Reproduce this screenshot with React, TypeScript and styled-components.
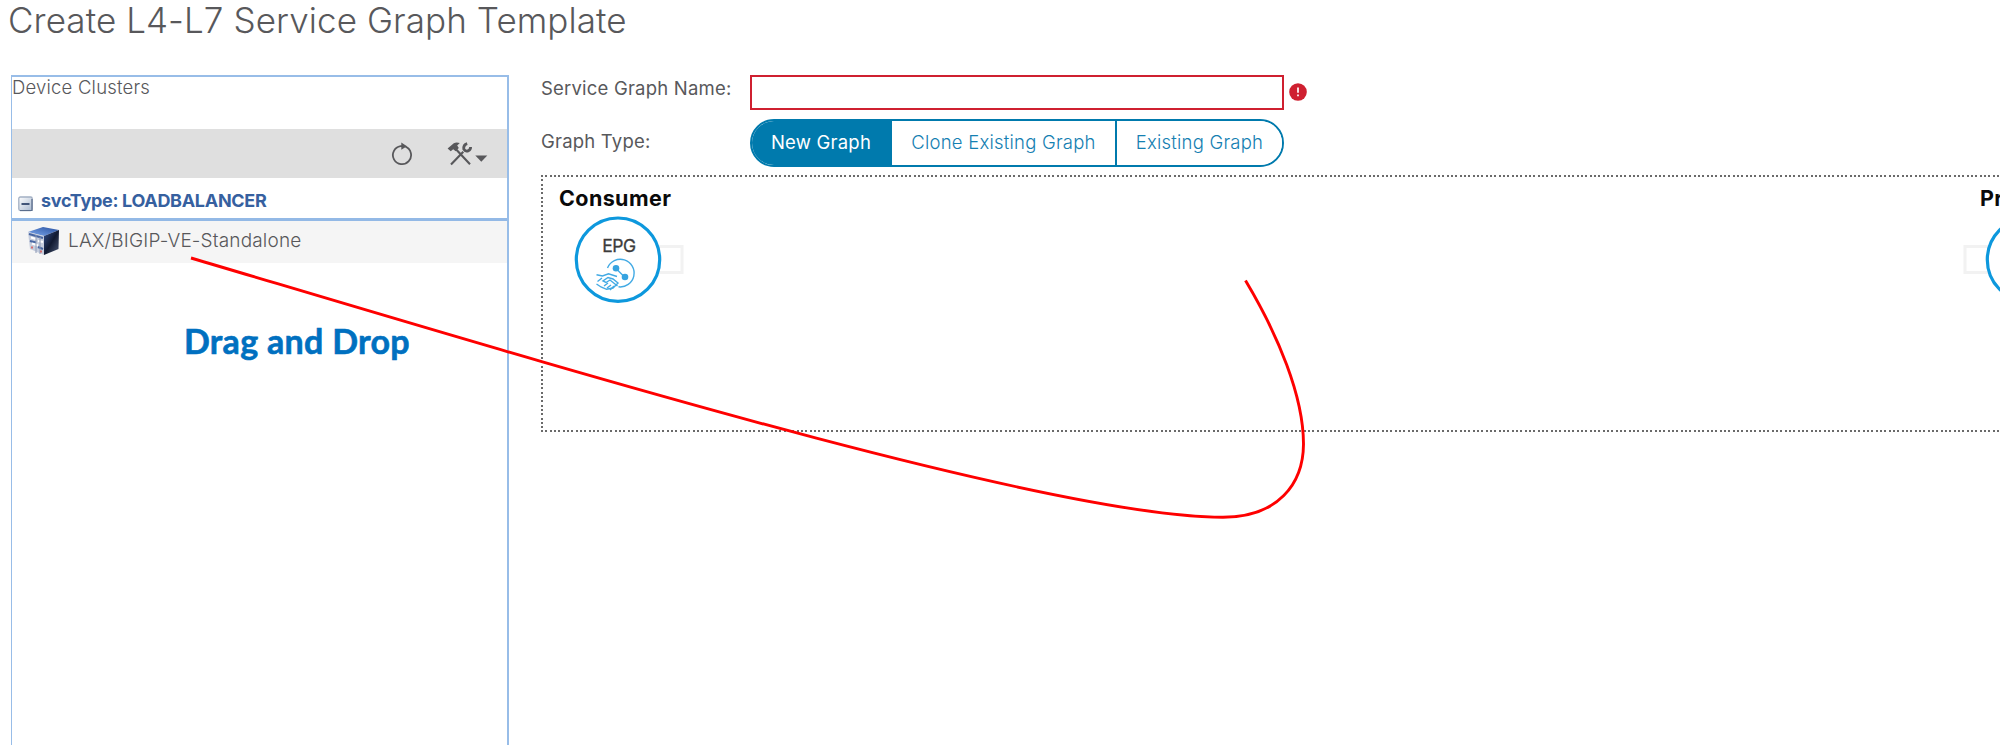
import React from "react";
import styled, { createGlobalStyle } from "styled-components";

const GlobalStyle = createGlobalStyle`
  * { box-sizing: border-box; }
  body { margin: 0; background: #fff; font-family: Inter, "Liberation Sans", sans-serif; }
`;

const Page = styled.div`
  position: relative;
  width: 2000px;
  height: 745px;
  overflow: hidden;
  color: #58585b;
  white-space: nowrap;
`;

const Title = styled.h1`
  margin: 0;
  height: 75px;
  padding-left: 8px;
  font-size: 35px;
  font-weight: 300;
  line-height: 40px;
  letter-spacing: 0.08px;
`;

const Body = styled.main`
  display: flex;
  height: 670px;
  padding-left: 11px;
`;

const Sidebar = styled.aside`
  flex: none;
  width: 498px;
  border: 2px solid #98bde8;
  border-left-width: 1px;
  border-bottom: 0;
`;

const SidebarTitle = styled.div`
  height: 52px;
  font-size: 18.5px;
  font-weight: 300;
  line-height: 21px;
  letter-spacing: 0.2px;
`;

const Toolbar = styled.div`
  display: flex;
  align-items: center;
  justify-content: flex-end;
  gap: 34px;
  height: 49px;
  padding-right: 19px;
  background: #dfdfdf;
`;

const GroupHeader = styled.div`
  display: flex;
  align-items: flex-end;
  gap: 8px;
  height: 43px;
  padding: 0 0 6px 6px;
  border-bottom: 3px solid #93b9e6;
  color: #36609f;
  font-size: 18px;
  font-weight: 700;
  line-height: 23px;
  letter-spacing: -0.3px;
`;

const DeviceRow = styled.div`
  display: flex;
  align-items: center;
  gap: 8px;
  height: 42px;
  padding: 0 0 3px 15px;
  background: #f5f5f5;
  font-size: 19px;
  font-weight: 300;
  letter-spacing: 0.16px;
`;

const Content = styled.section`
  flex: none;
  width: 1600px;
  margin-left: 32px;
`;

const FieldRow = styled.div<{ $height: number }>`
  display: flex;
  align-items: flex-start;
  height: ${(p) => p.$height}px;
`;

const Label = styled.label<{ $drop: number }>`
  width: 209px;
  padding-top: ${(p) => p.$drop}px;
  font-size: 18.5px;
  line-height: 24px;
  letter-spacing: 0.2px;
`;

const NameInput = styled.input`
  width: 534px;
  height: 35px;
  border: 2px solid #cf2030;
  outline: none;
  background: #fff;
`;

const ErrorIcon = styled.svg`
  margin: 8px 0 0 5px;
`;

const Segments = styled.div`
  display: flex;
  width: 534px;
  height: 48px;
  border: 2px solid #007aad;
  border-radius: 24px;
  overflow: hidden;
`;

const Segment = styled.button<{ $width: number; $active?: boolean }>`
  flex: none;
  width: ${(p) => p.$width}px;
  padding: 0 0 2px;
  border: 0;
  border-left: ${(p) => (p.$active ? "0" : "2px solid #007aad")};
  background: ${(p) => (p.$active ? "#007aad" : "#fff")};
  color: ${(p) => (p.$active ? "#fff" : "#1580b2")};
  font: ${(p) => (p.$active ? 400 : 300)} 18.5px Inter, sans-serif;
  letter-spacing: 0.22px;
`;

const dots = (dir: string) =>
  `repeating-linear-gradient(${dir}, #6a6a6a 0 2px, #ffffff 2px 4.333px)`;

const Canvas = styled.div`
  display: flex;
  justify-content: space-between;
  height: 257px;
  margin-top: 8px;
  padding: 10px 0 0 18px;
  background-image: ${dots("to right")}, ${dots("to right")}, ${dots("to bottom")};
  background-size: 100% 2px, 100% 2px, 2px 100%;
  background-position: 0 0, 0 100%, 0 0;
  background-repeat: no-repeat;
`;

const Endpoint = styled.div<{ $width: number }>`
  width: ${(p) => p.$width}px;
`;

const EndpointName = styled.div<{ $indent?: number }>`
  height: 31px;
  padding-left: ${(p) => p.$indent ?? 0}px;
  color: #0a0a0a;
  font-size: 21.5px;
  font-weight: 700;
  line-height: 26px;
  letter-spacing: 0.4px;
`;

const EndpointShape = styled.svg`
  display: block;
  overflow: visible;
`;

const Callout = styled.div`
  position: absolute;
  left: 184px;
  top: 321px;
  color: #0070c0;
  font-family: Lato, sans-serif;
  font-size: 34px;
  font-weight: 700;
  line-height: 40px;
  letter-spacing: 0.3px;
  -webkit-text-stroke: 0.6px #0070c0;
`;

const Arrow = styled.svg`
  position: absolute;
  inset: 0;
  pointer-events: none;
`;

const RefreshIcon = () => (
  <svg width="22" height="24" viewBox="0 0 22 24" fill="none">
    <path d="M14.5 4.7A9.1 9.1 0 1 1 9.6 4.1H12" stroke="#58585b" strokeWidth="1.8" />
    <path d="M10.3 .6L16 4.2L10.3 7.8Z" fill="#58585b" />
  </svg>
);

const ToolsIcon = () => (
  <svg width="41" height="26" viewBox="0 0 41 26" fill="none">
    <path d="M4 23.5L16.3 10.8M9.2 8.5L23 23.2" stroke="#58585b" strokeWidth="2.1" />
    <path d="M.6 7.4L6.8 2.3Q9.4 .8 12.8 2.1L10.2 4.6L11.8 7L8.6 10.2L6.2 8.3L3.7 10.3Z" fill="#58585b" />
    <path d="M20.2 2.6Q16.2 3.8 16.8 8.2Q18.3 11 21.6 9.6Q23.7 8.4 23.6 6" stroke="#58585b" strokeWidth="2.8" />
    <path d="M28.3 14.6H40.3L34.3 20.8Z" fill="#58585b" />
  </svg>
);

const CollapseIcon = () => (
  <svg width="15" height="16" viewBox="0 0 15 16">
    <defs>
      <linearGradient id="box" x1="0" y1="0" x2="1" y2="1">
        <stop offset="0" stopColor="#fff" />
        <stop offset="1" stopColor="#a9b9d0" />
      </linearGradient>
    </defs>
    <rect x=".8" y="1" width="13.4" height="13.6" rx="1.5" fill="url(#box)" stroke="#a3b0c4" strokeWidth="1.3" />
    <path d="M14 3V14.5H2" stroke="#5a6d8c" strokeWidth="1.2" fill="none" />
    <path d="M3.5 8H11.5" stroke="#30466c" strokeWidth="1.8" />
  </svg>
);

const DeviceIcon = () => (
  <svg width="33" height="30" viewBox="0 0 33 30">
    <defs>
      <linearGradient id="side" x1="0" y1="0" x2="1" y2="1">
        <stop offset="0" stopColor="#334f8c" />
        <stop offset=".5" stopColor="#111a31" />
        <stop offset="1" stopColor="#4d5a77" />
      </linearGradient>
      <linearGradient id="top" x1="0" y1="1" x2="1" y2="0">
        <stop offset="0" stopColor="#7da9ee" />
        <stop offset="1" stopColor="#274f9e" />
      </linearGradient>
    </defs>
    <path d="M1 6L16 1L32 4L17 10Z" fill="url(#top)" />
    <path d="M17 10L32 4L31.5 23L17 29Z" fill="url(#side)" />
    <path d="M1 6L17 10V29L3 23Z" fill="#c6cddd" />
    <path d="M2 8L16 12M3 15L9 16.5M11 21L16 23" stroke="#4766a3" strokeWidth="2.2" />
    <path d="M4 11.5L9 13M11 15L16 16M5 17.5L11 19.5" stroke="#fff" strokeWidth="2" />
    <path d="M9 9V27M13 11V28" stroke="#8c9ab6" strokeWidth="1" />
    <path d="M5 20.5V22.5M13 25.5H15" stroke="#d66c6c" strokeWidth="2" />
  </svg>
);

const EpgShape = ({ flip }: { flip?: boolean }) => (
  <EndpointShape width="130" height="90" viewBox="0 0 130 90">
    <rect x={flip ? -5 : 85} y="30.5" width="38" height="26" fill="none" stroke="#f2f2f2" strokeWidth="3" />
    <circle cx="59" cy="43.7" r="41.7" fill="#fff" stroke="#0d98dd" strokeWidth="3.2" />
    <text x="43.2" y="35.5" fontSize="17.5" fill="#3c3c3c" stroke="#3c3c3c" strokeWidth=".3" letterSpacing="-.4">EPG</text>
    <g fill="none" stroke="#42aae4" strokeWidth="1.4">
      <path d="M48.5 52A13.8 13.8 0 1 1 59.5 70.8" />
      <path d="M57 52.5L65.5 61" />
      <path d="M37.5 58.7L43.5 60L49.5 57.8L58 60.5" />
      <path d="M37.5 68L42 71L47.5 73.3L54 72L59 67L54 63L49 61.5L44 65L47 66.5L51 64L58.5 70" />
      <path d="M43 62L38.5 65.5M45 70L49 67M48 72L52 69M51 74L55 70" />
    </g>
    <circle cx="57" cy="52.2" r="3.3" fill="#36a3e0" />
    <circle cx="66" cy="61" r="3.3" fill="#36a3e0" />
  </EndpointShape>
);

export default function App() {
  return (
    <Page>
      <GlobalStyle />
      <Title>Create L4-L7 Service Graph Template</Title>
      <Body>
        <Sidebar>
          <SidebarTitle>Device Clusters</SidebarTitle>
          <Toolbar>
            <RefreshIcon />
            <ToolsIcon />
          </Toolbar>
          <GroupHeader>
            <CollapseIcon />
            <span>svcType: LOADBALANCER</span>
          </GroupHeader>
          <DeviceRow>
            <DeviceIcon />
            <span>LAX/BIGIP-VE-Standalone</span>
          </DeviceRow>
        </Sidebar>
        <Content>
          <FieldRow $height={44}>
            <Label $drop={1}>Service Graph Name:</Label>
            <NameInput />
            <ErrorIcon width="18" height="18" viewBox="0 0 18 18">
              <circle cx="9" cy="9" r="8.8" fill="#cf2030" />
              <path d="M9 4.6V9.8M9 11.4V13.2" stroke="#fff" strokeWidth="1.7" />
            </ErrorIcon>
          </FieldRow>
          <FieldRow $height={48}>
            <Label $drop={10}>Graph Type:</Label>
            <Segments>
              <Segment $active $width={138}>New Graph</Segment>
              <Segment $width={225}>Clone Existing Graph</Segment>
              <Segment $width={167}>Existing Graph</Segment>
            </Segments>
          </FieldRow>
          <Canvas>
            <Endpoint $width={140}>
              <EndpointName>Consumer</EndpointName>
              <EpgShape />
            </Endpoint>
            <Endpoint $width={171}>
              <EndpointName $indent={10}>Provider</EndpointName>
              <EpgShape flip />
            </Endpoint>
          </Canvas>
        </Content>
      </Body>
      <Callout>Drag and Drop</Callout>
      <Arrow width="2000" height="745" viewBox="0 0 2000 745" fill="none">
        <path
          d="M191 258C535 360 1047 517 1223 517.3C1278 517 1303.3 484 1303.5 444C1303.5 396 1278 335 1245.5 280.5"
          stroke="#fe0000"
          strokeWidth="2.9"
        />
      </Arrow>
    </Page>
  );
}
